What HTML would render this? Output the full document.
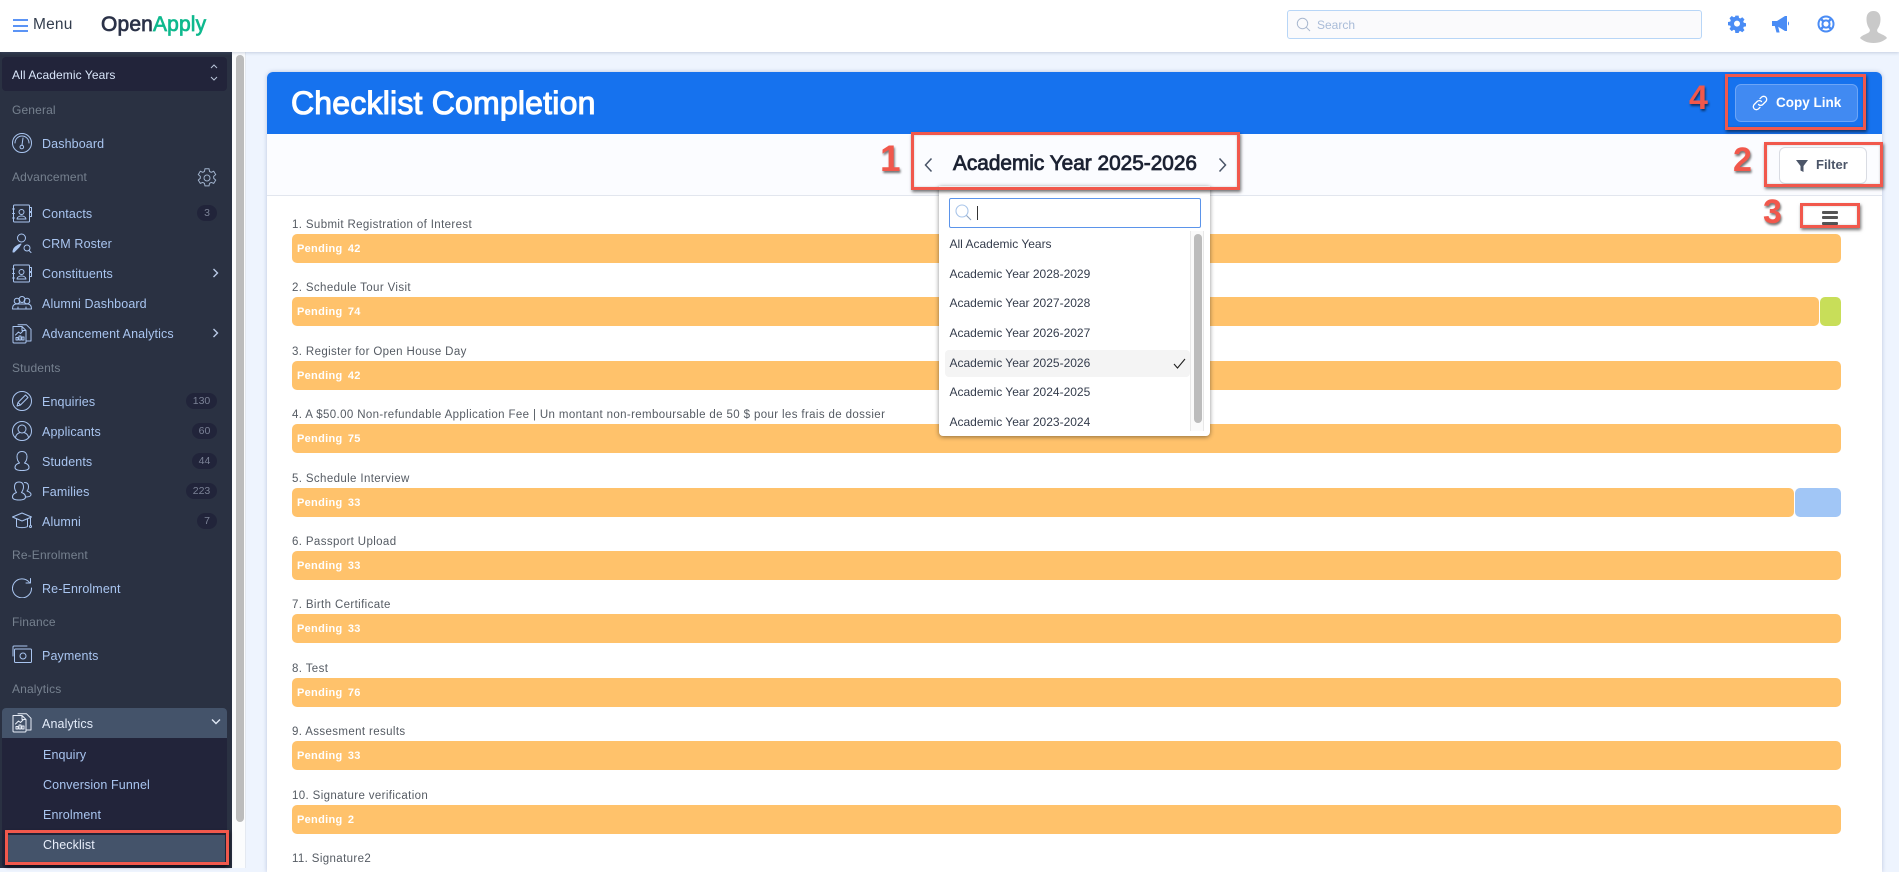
<!DOCTYPE html>
<html><head><meta charset="utf-8"><title>Checklist Completion</title>
<style>
html,body{margin:0;padding:0;width:1899px;height:868px;overflow:hidden;background:#eef4fe;font-family:"Liberation Sans",sans-serif}
div,span,svg{box-sizing:border-box}
.a{position:absolute}
.t{position:absolute;white-space:nowrap;line-height:20px;height:20px}
.h{position:absolute;left:12px;margin-top:1px;white-space:nowrap;line-height:20px;color:#76818f;font-size:12px;letter-spacing:.15px}
.n{position:absolute;left:42px;margin-top:1px;white-space:nowrap;line-height:20px;color:#a9c5f0;font-size:12.5px;letter-spacing:.12px}
.s{position:absolute;left:43px;margin-top:1px;white-space:nowrap;line-height:20px;color:#a9c5f0;font-size:12.5px;letter-spacing:.12px}
.b{position:absolute;right:15px;height:16px;border-radius:8px;background:#21243a;color:#7b8296;font-size:10.5px;line-height:16px;text-align:center}
.i{position:absolute;left:12px;width:20px;height:20px;fill:none;stroke:#a9c5f0;stroke-width:1;stroke-linecap:round;stroke-linejoin:round}
.l{position:absolute;left:292px;margin-top:1px;white-space:nowrap;font-size:11.5px;letter-spacing:.37px;color:#555b63;line-height:16px}
.bar{position:absolute;left:292px;width:1549px;height:29px;background:#ffc26b;border-radius:5px;color:#fff;font-weight:bold;font-size:11px;line-height:31px;padding-left:5px;letter-spacing:.3px;word-spacing:2px}
.o{position:absolute;left:949.5px;white-space:nowrap;font-size:12px;color:#343c4c;line-height:20px}
.r{position:absolute;border:3px solid #f1584c;box-shadow:1px 2px 3px rgba(0,0,0,.55),inset 0 0 2px rgba(0,0,0,.2)}
.num{position:absolute;font-weight:bold;font-size:34px;line-height:34px;color:#f1584c;text-shadow:1px 2px 2px rgba(0,0,0,.55)}
</style></head><body>

<!-- top bar -->
<div class="a" style="left:0;top:0;width:1899px;height:52px;background:#fff;box-shadow:0 1px 3px rgba(90,110,150,.28);z-index:3"></div>
<div style="position:absolute;left:0;top:0;width:1899px;height:52px;z-index:4">
  <div class="a" style="left:13px;top:19px;width:15px;height:2px;background:#5b94f5"></div>
  <div class="a" style="left:13px;top:25px;width:15px;height:2px;background:#5b94f5"></div>
  <div class="a" style="left:13px;top:30px;width:15px;height:2px;background:#5b94f5"></div>
  <div class="t" style="left:33px;top:15px;font-size:15.5px;letter-spacing:.2px;color:#333d4d">Menu</div>
  <div class="t" style="left:101px;top:15px;font-size:21px;letter-spacing:.15px;-webkit-text-stroke:.7px #2b3248;color:#2b3248">Open<span style="color:#0fb98e;-webkit-text-stroke:.7px #0fb98e">Apply</span></div>
  <div class="a" style="left:1287px;top:10px;width:415px;height:29px;border:1px solid #b8d6f7;border-radius:3px;background:#fafafc"></div>
  <svg class="a" style="left:1296px;top:17px;width:15px;height:15px" viewBox="0 0 15 15" fill="none" stroke="#a9b8cf" stroke-width="1"><circle cx="6.5" cy="6.5" r="5.2"/><path d="M10.3 10.3L14 14"/></svg>
  <div class="t" style="left:1317px;top:15px;font-size:12px;color:#a9bcd8">Search</div>
  <svg class="a" style="left:1728px;top:15px;width:18px;height:18px" viewBox="0 0 18 18"><path fill="#4a8cf5" fill-rule="evenodd" d="M7.4 1h3.2l.4 2.3 1.3.6 2-1.3 2.2 2.3-1.3 1.9.6 1.4 2.2.4v3.2l-2.2.4-.6 1.3 1.3 2-2.2 2.2-2-1.3-1.3.6-.4 2.2H7.4L7 15.8l-1.3-.6-2 1.3-2.2-2.2 1.3-2-.6-1.3L0 10.6V7.4l2.2-.4.6-1.4L1.5 3.7l2.2-2.3 2 1.3L7 2.3zM9 6a3 3 0 1 0 0 6 3 3 0 0 0 0-6z" transform="translate(0 -.4)"/></svg>
  <svg class="a" style="left:1771px;top:15px;width:19px;height:19px" viewBox="0 0 19 19"><path fill="#4a8cf5" d="M1 6h5l8-5h2v15h-2l-8-5H7l1.6 6.500H5.500L3.800 11H1zM17 6.500c1.400.5 1.400 3.500 0 4z"/></svg>
  <svg class="a" style="left:1817px;top:15px;width:18px;height:18px" viewBox="0 0 18 18" fill="none" stroke="#4a8cf5"><circle cx="9" cy="9" r="7.500" stroke-width="2"/><circle cx="9" cy="9" r="3.600" stroke-width="2"/><path d="M3.500 3.500L6.500 6.500M14.500 3.500L11.500 6.500M3.500 14.500L6.500 11.500M14.500 14.500L11.500 11.500" stroke-width="2.400"/></svg>
  <svg class="a" style="left:1860px;top:11px;width:27px;height:32px" viewBox="0 0 27 32"><path fill="#c9c9c9" d="M13.500 0c4.500 0 7 3 7 8 0 4-1 7-3 10-.8 1.500-.3 3 1.500 4 3 1.500 6.500 2.500 8 5-3 3-7.500 5-13.500 5S3 30 0 27c1.500-2.500 5-3.500 8-5 1.800-1 2.300-2.500 1.500-4-2-3-3-6-3-10 0-5 2.500-8 7-8z"/></svg>
</div>

<!-- sidebar -->
<div class="a" style="left:232px;top:52px;width:14px;height:816px;background:#fbfcfd;border-right:1px solid #e4e9f1"></div>
<div class="a" style="left:236px;top:55px;width:8px;height:767px;background:#bcbcbc;border-radius:4px"></div>
<div class="a" style="left:0;top:52px;width:232px;height:816px;background:#2a3142"></div>
<div style="position:absolute;left:0;top:0;width:232px;height:868px;z-index:2">
  <div class="a" style="left:2px;top:57px;width:225px;height:34px;background:#22243a;border-radius:4px"></div>
  <div class="t" style="left:12px;top:65px;font-size:12px;color:#d9e6fa;letter-spacing:.08px">All Academic Years</div>
  <svg class="a" style="left:210px;top:64px;width:8px;height:17px" viewBox="0 0 8 17" fill="none" stroke="#b9c4d8" stroke-width="1"><path d="M1 4L4 1L7 4M1 13L4 16L7 13"/></svg>

  <div class="h" style="top:99px">General</div>
  <svg class="i" style="top:133px" viewBox="0 0 20 20"><circle cx="10" cy="10" r="9.500"/><path d="M3 10a7 7 0 0 1 14 0M11 5l-1 7"/><circle cx="9.800" cy="14" r="1.800"/></svg>
  <div class="n" style="top:133px">Dashboard</div>

  <div class="h" style="top:166px">Advancement</div>
  <svg class="a" style="left:197px;top:168px;width:20px;height:20px" viewBox="0 0 20 20" fill="none" stroke="#a0b2cc" stroke-width="1"><path d="M8 .8h4l.6 2.700 1.600.8 2.500-1 2 3.300-2 1.700v2l2 1.800-2 3.300-2.500-1-1.600.9-.6 2.600H8l-.6-2.600-1.600-.9-2.500 1-2-3.300 2-1.800V8.300l-2-1.700 2-3.300 2.500 1 1.600-.8z"/><circle cx="10" cy="10" r="3"/></svg>

  <svg class="i" style="top:204px" viewBox="0 0 20 20"><rect x="1.500" y="1" width="16" height="17" rx="1"/><circle cx="9.500" cy="8" r="2.500"/><path d="M5 15c.5-4 8.500-4 9 0zM.5 5h2M.5 9.500h2M.5 14h2M17.500 3.500h2v4h-2M17.500 8.500h2v4h-2"/></svg>
  <div class="n" style="top:203px">Contacts</div><div class="b" style="top:205px;width:20px">3</div>
  <svg class="i" style="top:233px" viewBox="0 0 20 20"><circle cx="9.500" cy="5" r="4"/><path d="M1 19c0-4 4-7 8-8l-2 3-5 5z" fill="#a9c5f0"/><circle cx="15" cy="15" r="3"/><path d="M17 17.500l2 2"/></svg>
  <div class="n" style="top:233px">CRM Roster</div>
  <svg class="i" style="top:264px" viewBox="0 0 20 20"><rect x="1.500" y="1" width="16" height="17" rx="1"/><circle cx="9.500" cy="8" r="2.500"/><path d="M5 15c.5-4 8.500-4 9 0zM.5 5h2M.5 9.500h2M.5 14h2M17.500 3.500h2v4h-2M17.500 8.500h2v4h-2"/></svg>
  <div class="n" style="top:263px">Constituents</div>
  <svg class="a" style="left:212px;top:268px;width:7px;height:10px" viewBox="0 0 7 10" fill="none" stroke="#b9c9e6" stroke-width="1.400"><path d="M1.500 1L5.500 5L1.500 9"/></svg>
  <svg class="i" style="top:293px" viewBox="0 0 20 20"><circle cx="5" cy="8" r="2.800"/><circle cx="10" cy="6.500" r="3"/><circle cx="15" cy="8" r="2.800"/><path d="M.5 16c0-4 2-5 4-5h11c2 0 4 1 4 5zM6 16v-2M14 16v-2"/></svg>
  <div class="n" style="top:293px">Alumni Dashboard</div>
  <svg class="i" style="top:324px" viewBox="0 0 20 20"><path d="M1 2.500h9l4 4V18a1 1 0 0 1-1 1H2a1 1 0 0 1-1-1zM10 2.500v4h4M6 .8h8.500l4.500 4.500V17h-5"/><path d="M4 16v-2.500h2V16zM7 16v-4h2v4zM10 16v-3h2v3zM3.500 11l3-3 2 1.500 3-3"/></svg>
  <div class="n" style="top:323px">Advancement Analytics</div>
  <svg class="a" style="left:212px;top:328px;width:7px;height:10px" viewBox="0 0 7 10" fill="none" stroke="#b9c9e6" stroke-width="1.400"><path d="M1.500 1L5.500 5L1.500 9"/></svg>

  <div class="h" style="top:357px">Students</div>
  <svg class="i" style="top:391px" viewBox="0 0 20 20"><circle cx="10" cy="10" r="9.500"/><path d="M5 15l1-3.500 7.500-7.500 2.500 2.500-7.500 7.500zM6 11.500l2.500 2.500"/></svg>
  <div class="n" style="top:391px">Enquiries</div><div class="b" style="top:393px;width:31px">130</div>
  <svg class="i" style="top:421px" viewBox="0 0 20 20"><circle cx="10" cy="10" r="9.500"/><circle cx="10" cy="8" r="4"/><path d="M3.500 16.500c.5-3 3-4.500 4.500-5M16.500 16.500c-.5-3-3-4.500-4.500-5"/></svg>
  <div class="n" style="top:421px">Applicants</div><div class="b" style="top:423px;width:25px">60</div>
  <svg class="i" style="top:451px" viewBox="0 0 20 20"><path d="M10 .5c3.500 0 5 2.500 5 5 0 3-1 5-2.500 6.500 3 .8 4.500 2 4.500 4.500 0 2-2 3-7 3s-7-1-7-3c0-2.500 1.500-3.700 4.500-4.500C6 10.500 5 8.500 5 5.500c0-2.500 1.500-5 5-5z"/></svg>
  <div class="n" style="top:451px">Students</div><div class="b" style="top:453px;width:25px">44</div>
  <svg class="i" style="top:481px" viewBox="0 0 20 20"><path d="M7 1c3 0 4.500 2 4.500 5 0 2.500-1 4-2 5.500 2.500.8 4 2 4 4.500 0 2-2.500 3-6.500 3S.5 18 .5 16c0-2.500 1.500-3.700 4-4.500-1-1.500-2-3-2-5.500 0-3 1.500-5 4.500-5zM12.500 1.500c2.500 0 4 1.500 4 4 0 2-.5 3.500-1.500 4.500 2 .7 4 1.500 4 3.500 0 1.500-2 2.500-5 2.500"/></svg>
  <div class="n" style="top:481px">Families</div><div class="b" style="top:483px;width:31px">223</div>
  <svg class="i" style="top:511px" viewBox="0 0 20 20"><path d="M.5 6L10 2l9.500 4L10 10zM4.500 8v7.500c2 1.500 9 1.500 11 0V8M18.500 6.500v8"/><circle cx="18.500" cy="15.500" r="1"/></svg>
  <div class="n" style="top:511px">Alumni</div><div class="b" style="top:513px;width:20px">7</div>

  <div class="h" style="top:544px">Re-Enrolment</div>
  <svg class="i" style="top:578px" viewBox="0 0 20 20"><path d="M17.500 4.500A9.500 9.500 0 1 0 19.500 10M18.500 .5v4.500H14"/></svg>
  <div class="n" style="top:578px">Re-Enrolment</div>

  <div class="h" style="top:611px">Finance</div>
  <svg class="i" style="top:645px" viewBox="0 0 20 20"><path d="M1 11V2a1 1 0 0 1 1-1h13"/><rect x="2.500" y="4" width="17" height="13.500" rx="1"/><circle cx="11" cy="11" r="3"/></svg>
  <div class="n" style="top:645px">Payments</div>

  <div class="h" style="top:678px">Analytics</div>
  <div class="a" style="left:2px;top:708px;width:225px;height:160px;background:#22243a;border-radius:4px"></div>
  <div class="a" style="left:2px;top:708px;width:225px;height:30px;background:#44536a;border-radius:4px 4px 0 0"></div>
  <svg class="i" style="top:713px;stroke:#e8eef8" viewBox="0 0 20 20"><path d="M1 2.500h9l4 4V18a1 1 0 0 1-1 1H2a1 1 0 0 1-1-1zM10 2.500v4h4M6 .8h8.500l4.500 4.500V17h-5"/><path d="M4 16v-2.500h2V16zM7 16v-4h2v4zM10 16v-3h2v3zM3.500 11l3-3 2 1.500 3-3"/></svg>
  <div class="n" style="top:713px;color:#e4ecfa">Analytics</div>
  <svg class="a" style="left:211px;top:718px;width:10px;height:8px" viewBox="0 0 10 8" fill="none" stroke="#dfe7f5" stroke-width="1.400"><path d="M1 1.500L5 5.500L9 1.500"/></svg>
  <div class="s" style="top:744px">Enquiry</div>
  <div class="s" style="top:774px">Conversion Funnel</div>
  <div class="s" style="top:804px">Enrolment</div>
  <div class="a" style="left:8px;top:835px;width:217px;height:28px;background:#44536a"></div>
  <div class="s" style="top:834px;color:#e8eefa">Checklist</div>
</div>
<div class="r" style="left:5px;top:830px;width:224px;height:35px;z-index:5"></div>

<!-- card -->
<div class="a" style="left:267px;top:72px;width:1615px;height:800px;background:#fff;border-radius:6px 6px 0 0;box-shadow:0 0 4px rgba(90,110,160,.35)"></div>
<div class="a" style="left:267px;top:72px;width:1615px;height:62px;background:#1672ee;border-radius:6px 6px 0 0"></div>
<div class="a" style="left:267px;top:134px;width:1615px;height:62px;background:#fbfcff;border-bottom:1px solid #e2e6ee"></div>
<div class="t" style="left:291px;top:86px;height:34px;line-height:34px;font-size:32px;-webkit-text-stroke:1.1px #fff;color:#fff;letter-spacing:.2px">Checklist Completion</div>

<!-- copy link -->
<div class="a" style="left:1735px;top:84px;width:123px;height:38px;background:#418af2;border:1px solid #6da5f6;border-radius:6px"></div>
<svg class="a" style="left:1752px;top:95px;width:16px;height:16px" viewBox="0 0 16 16" fill="none" stroke="#fff" stroke-width="1.300" stroke-linecap="round"><path d="M6.500 9.500a3 3 0 0 0 4.300 0l3-3a3 3 0 0 0-4.300-4.300L8 3.700"/><path d="M9.500 6.500a3 3 0 0 0-4.300 0l-3 3a3 3 0 0 0 4.300 4.300L8 12.300"/></svg>
<div class="t" style="left:1776px;top:93px;font-size:13.500px;font-weight:bold;color:#fff">Copy Link</div>

<!-- filter -->
<div class="a" style="left:1779px;top:147px;width:88px;height:37px;background:#fff;border:1px solid #d9dce3;border-radius:6px"></div>
<svg class="a" style="left:1796px;top:160px;width:12px;height:12px" viewBox="0 0 12 12"><path fill="#4b5568" d="M0 0h12L7.500 6v6l-3-1.500V6z"/></svg>
<div class="t" style="left:1816px;top:155px;font-size:13px;font-weight:bold;color:#4b5568">Filter</div>

<!-- hamburger -->
<div class="a" style="left:1822px;top:211px;width:16px;height:3px;background:#555;border-radius:1px"></div>
<div class="a" style="left:1822px;top:216px;width:16px;height:3px;background:#555;border-radius:1px"></div>
<div class="a" style="left:1822px;top:222px;width:16px;height:3px;background:#555;border-radius:1px"></div>

<!-- rows -->
<div class="l" style="top:216px">1. Submit Registration of Interest</div><div class="bar" style="top:234px">Pending 42</div>
<div class="l" style="top:279px">2. Schedule Tour Visit</div>
<div class="bar" style="top:297px;width:1527px">Pending 74</div>
<div class="a" style="left:1820px;top:297px;width:21px;height:29px;background:#c8de59;border-radius:5px"></div>
<div class="l" style="top:343px">3. Register for Open House Day</div><div class="bar" style="top:361px">Pending 42</div>
<div class="l" style="top:406px">4. A $50.00 Non-refundable Application Fee | Un montant non-remboursable de 50 $ pour les frais de dossier</div><div class="bar" style="top:424px">Pending 75</div>
<div class="l" style="top:470px">5. Schedule Interview</div>
<div class="bar" style="top:488px;width:1502px">Pending 33</div>
<div class="a" style="left:1795px;top:488px;width:46px;height:29px;background:#a1c6f6;border-radius:5px"></div>
<div class="l" style="top:533px">6. Passport Upload</div><div class="bar" style="top:551px">Pending 33</div>
<div class="l" style="top:596px">7. Birth Certificate</div><div class="bar" style="top:614px">Pending 33</div>
<div class="l" style="top:660px">8. Test</div><div class="bar" style="top:678px">Pending 76</div>
<div class="l" style="top:723px">9. Assesment results</div><div class="bar" style="top:741px">Pending 33</div>
<div class="l" style="top:787px">10. Signature verification</div><div class="bar" style="top:805px">Pending 2</div>
<div class="l" style="top:850px">11. Signature2</div>

<!-- dropdown -->
<div class="a" style="left:939px;top:186px;width:271px;height:250px;background:#fff;border-radius:0 0 4px 4px;box-shadow:0 1px 5px rgba(0,0,0,.45)"></div>
<div class="a" style="left:949px;top:198px;width:252px;height:30px;background:#fff;border:1px solid #5b94ea;border-radius:2px"></div>
<svg class="a" style="left:955px;top:204px;width:17px;height:17px" viewBox="0 0 17 17" fill="none" stroke="#a9c5ea" stroke-width="1.100"><circle cx="7" cy="7" r="6"/><path d="M11.500 11.500L16 16" stroke="#8fa3bf"/></svg>
<div class="a" style="left:977px;top:206px;width:1px;height:14px;background:#333"></div>
<div class="a" style="left:1190px;top:231px;width:14px;height:200px;background:#fafafa;border-left:1px solid #e8e8e8;border-right:1px solid #e8e8e8"></div>
<div class="a" style="left:1194px;top:234px;width:8px;height:189px;background:#bcbcbc;border-radius:4px"></div>
<div class="a" style="left:945px;top:350px;width:245px;height:27px;background:#f4f4f4;border-radius:4px"></div>
<div class="o" style="top:234px">All Academic Years</div>
<div class="o" style="top:264px">Academic Year 2028-2029</div>
<div class="o" style="top:293px">Academic Year 2027-2028</div>
<div class="o" style="top:323px">Academic Year 2026-2027</div>
<div class="o" style="top:353px">Academic Year 2025-2026</div>
<div class="o" style="top:382px">Academic Year 2024-2025</div>
<div class="o" style="top:412px">Academic Year 2023-2024</div>
<svg class="a" style="left:1173px;top:358px;width:13px;height:11px" viewBox="0 0 13 11" fill="none" stroke="#222" stroke-width="1.100"><path d="M1 6l3.500 4L12 1"/></svg>

<!-- academic year heading -->
<svg class="a" style="left:924px;top:157px;width:9px;height:16px;z-index:6" viewBox="0 0 9 16" fill="none" stroke="#4a5568" stroke-width="1.500"><path d="M7.500 1.500L1.500 8L7.500 14.500"/></svg>
<svg class="a" style="left:1218px;top:157px;width:9px;height:16px;z-index:6" viewBox="0 0 9 16" fill="none" stroke="#4a5568" stroke-width="1.500"><path d="M1.500 1.500L7.500 8L1.500 14.500"/></svg>
<div class="t" style="left:953px;top:152px;height:24px;line-height:24px;font-size:20.800px;-webkit-text-stroke:.8px #1c2233;color:#1c2233;z-index:6">Academic Year 2025-2026</div>

<!-- annotations -->
<div class="r" style="left:911px;top:132px;width:329px;height:58px;z-index:5"></div>
<div class="r" style="left:1725px;top:74px;width:141px;height:56px;z-index:5"></div>
<div class="r" style="left:1764px;top:142px;width:119px;height:45px;z-index:5"></div>
<div class="r" style="left:1800px;top:203px;width:60px;height:25px;z-index:5"></div>
<div class="num" style="left:880px;top:140px;font-size:37px;line-height:37px">1</div>
<div class="num" style="left:1733px;top:143px">2</div>
<div class="num" style="left:1763px;top:195px">3</div>
<div class="num" style="left:1689px;top:81px">4</div>
</body></html>
